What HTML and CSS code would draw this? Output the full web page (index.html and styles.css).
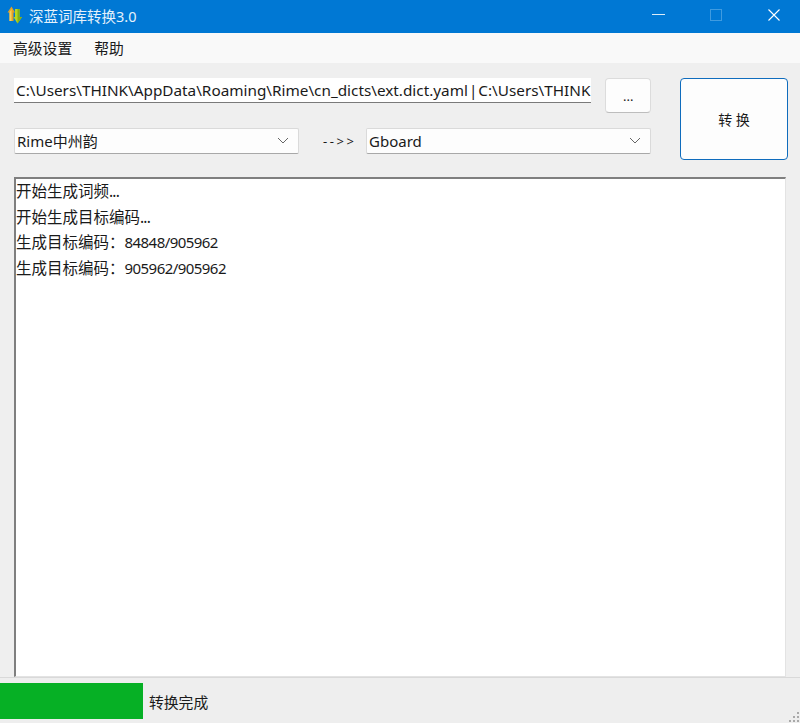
FILE: index.html
```html
<!DOCTYPE html>
<html lang="zh-CN">
<head>
<meta charset="utf-8">
<title>深蓝词库转换3.0</title>
<link rel="stylesheet" href="styles.css">
</head>
<body>
<div class="window">
  <header class="titlebar">
    <svg class="app-icon" width="16" height="18" viewBox="0 0 16 18">
      <path d="M0.5 6.5 L4.5 0.5 L8 6.5 L6.5 6.5 L6.5 15 L2.5 15 L2.5 6.5 Z" fill="#e8a020"/>
      <path d="M2.5 6.5 L4.5 3 L4.5 15 L2.5 15 Z" fill="#f6d060"/>
      <path d="M8 3 L12.5 3 L12.5 11 L15 11 L10.5 17.5 L6.5 11 L8 11 Z" fill="#b6d820"/>
      <path d="M10.5 3 L12.5 3 L12.5 11 L15 11 L10.5 17.5 Z" fill="#86b010"/>
    </svg>
    <span class="app-title">深蓝词库转换3.0</span>
    <div class="win-controls">
      <svg class="win-icon" width="14" height="14" viewBox="0 0 14 14"><path d="M1 6.5H14" stroke="#dcecf8" stroke-width="1"/></svg>
      <svg class="win-icon" width="14" height="14" viewBox="0 0 14 14"><rect x="1.5" y="1.5" width="11" height="11" fill="none" stroke="#3f9be0" stroke-width="1"/></svg>
      <svg class="win-icon" width="14" height="14" viewBox="0 0 14 14"><path d="M1.5 1.5L12.5 12.5M12.5 1.5L1.5 12.5" stroke="#fff" stroke-width="1.1"/></svg>
    </div>
  </header>
  <nav class="menubar">
    <span class="menu-item">高级设置</span>
    <span class="menu-item">帮助</span>
  </nav>
  <main class="content">
    <section class="controls">
      <div class="path-row">
        <div class="path-input">C:\Users\THINK\AppData\Roaming\Rime\cn_dicts\ext.dict.yaml | C:\Users\THINK</div>
        <button class="btn browse">...</button>
      </div>
      <div class="select-row">
        <div class="select"><span>Rime中州韵</span><svg width="12" height="7" viewBox="0 0 12 7"><path d="M1 1L6 6L11 1" fill="none" stroke="#666" stroke-width="1"/></svg></div>
        <span class="arrow">--&gt;&gt;</span>
        <div class="select"><span>Gboard</span><svg width="12" height="7" viewBox="0 0 12 7"><path d="M1 1L6 6L11 1" fill="none" stroke="#666" stroke-width="1"/></svg></div>
      </div>
      <button class="btn convert">转 换</button>
    </section>
    <section class="log">
      <p>开始生成词频<span class="dots">...</span></p>
      <p>开始生成目标编码<span class="dots">...</span></p>
      <p>生成目标编码：<span class="num">84848/905962</span></p>
      <p>生成目标编码：<span class="num">905962/905962</span></p>
    </section>
  </main>
  <footer class="statusbar">
    <div class="progress"></div>
    <span class="status-text">转换完成</span>
    <svg class="grip" width="12" height="12" viewBox="0 0 12 12">
      <g fill="#a9a9a9"><rect x="9" y="1" width="2" height="2"/><rect x="5" y="5" width="2" height="2"/><rect x="9" y="5" width="2" height="2"/><rect x="1" y="9" width="2" height="2"/><rect x="5" y="9" width="2" height="2"/><rect x="9" y="9" width="2" height="2"/></g>
    </svg>
  </footer>
</div>
</body>
</html>
```
FILE: styles.css
```css
* { box-sizing: border-box; }
html, body { margin: 0; padding: 0; }
body {
  font-family: "Noto Sans", "Noto Sans CJK SC", sans-serif;
  color: #1a1a1a;
  background: #f0f0f0;
}
.window {
  width: 800px;
  height: 723px;
  display: flex;
  flex-direction: column;
  overflow: hidden;
}
.titlebar {
  height: 33px;
  flex: none;
  background: #0078d4;
  display: flex;
  align-items: center;
  padding: 0 19px 3px 7px;
  color: #e4f1fb;
}
.app-icon { flex: none; margin-right: 6px; }
.app-title { font-size: 14.5px; }
.win-controls {
  margin-left: auto;
  display: flex;
  gap: 44px;
}
.win-icon { display: block; }
.menubar {
  height: 30px;
  flex: none;
  background: #f9f9f9;
  display: flex;
  align-items: center;
  gap: 22px;
  padding: 0 0 2px 13px;
  font-size: 14.8px;
}
.content {
  flex: 1;
  min-height: 0;
  display: flex;
  flex-direction: column;
  padding: 15px 15px 0 14px;
  background: #efefef;
  gap: 17px;
}
.controls {
  display: grid;
  grid-template-columns: 637px 108px;
  grid-template-rows: 34px 25px;
  row-gap: 16px;
  column-gap: 29px;
  height: 82px;
  width: 788px;
}
.path-row {
  display: flex;
  gap: 14px;
}
.path-input {
  width: 578px;
  height: 25px;
  background: #fff;
  border-bottom: 1px solid #7a7a7a;
  padding: 0 1px 0 2px;
  font-size: 15.3px;
  line-height: 25px;
  word-spacing: -3px;
  white-space: nowrap;
}
.btn {
  background: #fdfdfd;
  font-family: inherit;
  color: #1a1a1a;
  padding: 0;
}
.browse {
  width: 46px;
  height: 35px;
  border: 1px solid #dcdcdc;
  border-bottom-color: #bdbdbd;
  border-radius: 4px;
  font-size: 13px;
}
.convert {
  grid-column: 2;
  grid-row: 1 / 3;
  height: 82px;
  border: 1px solid #0f6cbd;
  border-radius: 4px;
  font-size: 14px;
}
.select-row {
  grid-column: 1;
  grid-row: 2;
  display: flex;
  align-items: center;
}
.select {
  width: 285px;
  height: 26px;
  background: #fdfdfd;
  border: 1px solid #dadada;
  border-bottom-color: #a8a8a8;
  border-radius: 2px;
  display: flex;
  align-items: center;
  justify-content: space-between;
  padding: 0 9px 0 2px;
  font-size: 15px;
}
.arrow {
  width: 67px;
  padding-left: 24px;
  font-size: 13px;
  letter-spacing: 2.6px;
  white-space: nowrap;
}
.log {
  flex: 1;
  min-height: 0;
  width: 772px;
  background: #fff;
  border-top: 2px solid #7f7f7f;
  border-left: 2px solid #7f7f7f;
  border-right: 1px solid #e3e3e3;
  border-bottom: 1px solid #e3e3e3;
  font-size: 15.5px;
}
.log p {
  margin: 0;
  height: 25.6px;
  line-height: 25.6px;
}
.dots { letter-spacing: -0.8px; }
.num {
  font-size: 15px;
  letter-spacing: -0.55px;
}
.statusbar {
  height: 46px;
  flex: none;
  background: #eeeeee;
  display: flex;
  align-items: center;
  position: relative;
  gap: 6px;
  border-top: 1px solid #d9d9d9;
  padding-top: 1px;
}
.progress {
  width: 143px;
  height: 36px;
  background: #06b025;
}
.status-text { font-size: 14.8px; padding-top: 1px; }
.grip { position: absolute; right: 0; bottom: 0; }
```
